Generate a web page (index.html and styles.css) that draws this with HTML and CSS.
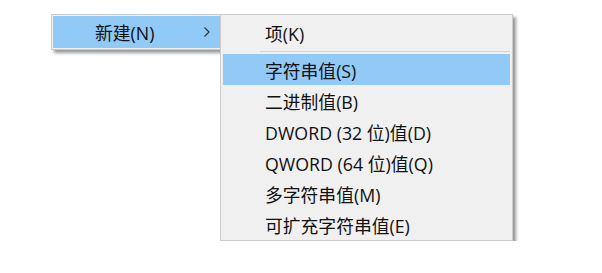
FILE: index.html
```html
<!DOCTYPE html>
<html lang="zh-CN">
<head>
    <meta charset="UTF-8">
    <title>新建</title>
    <link rel="stylesheet" href="styles.css">
</head>
<body>
    <div class="menus">
        <div class="menu main-menu">
            <div class="item active">
                <span class="label">新建(N)</span>
                <span class="arrow">
                    <svg width="8" height="12" viewBox="0 0 8 12"><path d="M1.5 1.5 L6 6 L1.5 10.5" fill="none" stroke="#333" stroke-width="1.2"/></svg>
                </span>
            </div>
        </div>

        <div class="menu submenu">
            <div class="item"><span class="label">项(K)</span></div>
            <div class="separator"></div>
            <div class="item active"><span class="label">字符串值(S)</span></div>
            <div class="item"><span class="label">二进制值(B)</span></div>
            <div class="item"><span class="label">DWORD (32 位)值(D)</span></div>
            <div class="item"><span class="label">QWORD (64 位)值(Q)</span></div>
            <div class="item"><span class="label">多字符串值(M)</span></div>
            <div class="item"><span class="label">可扩充字符串值(E)</span></div>
        </div>
    </div>
</body>
</html>
```

FILE: styles.css
```css
body {
    margin: 0;
    padding: 14px 0 0 51px;
    background: #fff;
    font-family: "Open Sans", "Noto Sans CJK SC", sans-serif;
    font-size: 17.8px;
    color: #111;
}

.menus {
    display: flex;
    align-items: flex-start;
}

.menu {
    background: #f0f0f0;
    border: 1px solid #cccccc;
    box-shadow: 3px 3px 3px rgba(0, 0, 0, 0.4);
}

.main-menu {
    width: 167px;
    padding: 1px;
}

.main-menu .item {
    height: 32px;
}

.item {
    display: flex;
    align-items: center;
    height: 31px;
    padding-left: 42px;
}

.item.active {
    background: #91c9f7;
}

.arrow {
    margin-left: auto;
    margin-right: 9px;
    display: flex;
}

/* подменю перекрывает край основного меню */
.submenu {
    position: relative;
    z-index: 1;
    margin-left: -2px;
    width: 287px;
    padding: 2px 2px 0;
}

.separator {
    height: 1px;
    background: #d5d5d5;
    margin: 3px 0 2px 37px;
}
```
